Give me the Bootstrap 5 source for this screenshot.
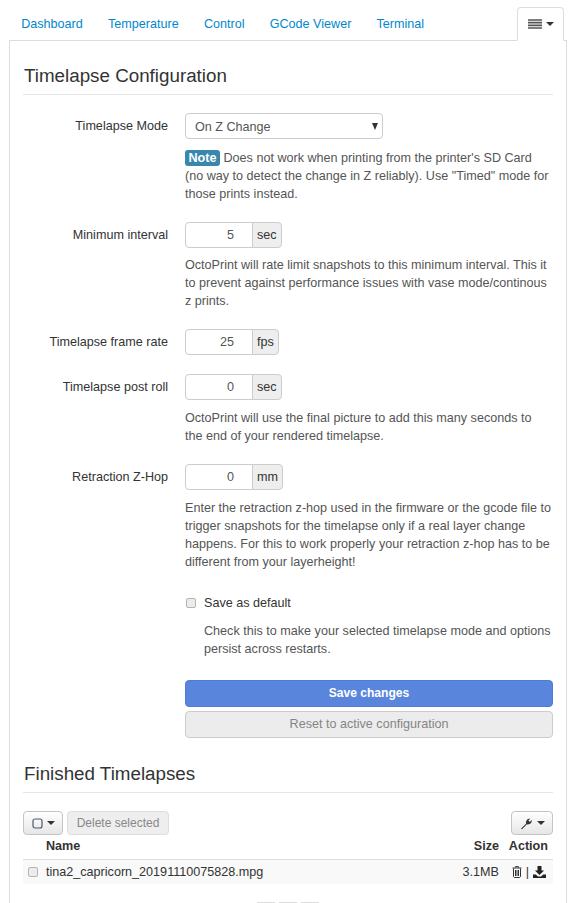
<!DOCTYPE html>
<html lang="en">
<head>
    <meta charset="UTF-8">
    <meta name="viewport" content="width=device-width, initial-scale=1.0">
    <title>Timelapse</title>
    <link href="https://cdn.jsdelivr.net/npm/bootstrap@5.3.0/dist/css/bootstrap.min.css" rel="stylesheet">
    <style>
        html, body { height: 903px; overflow: hidden; }
        body { font-family: "Liberation Sans", Arial, sans-serif; font-size: 12.6px; line-height: 18px; color: #333; background: #fff; }
        .tab-bar { height: 41px; padding-left: 8.6px; position: relative; margin-bottom: -1px; }
        .tab-link { color: #08c; text-decoration: none; padding: 0 12.6px; line-height: 18px; margin-top: 15px; }
        .tab-menu { margin-left: auto; width: 47px; height: 34px; margin-top: 7px; margin-right: 11px; border: 1px solid #ddd; border-bottom-color: #fff; border-radius: 4px 4px 0 0; background: #fff; position: relative; z-index: 2; }
        .caret-down { display: inline-block; width: 0; height: 0; border-left: 4px solid transparent; border-right: 4px solid transparent; border-top: 4px solid #333; }
        .tab-pane-box { margin: 0 8px 0 9px; border: 1px solid #ddd; border-bottom: 0; height: 870px; padding: 14px 13px 0 13px; overflow: hidden; }
        .sec-title { font-size: 18.8px; font-weight: 400; line-height: 42px; height: 40px; margin: 0; padding-left: 1px; border-bottom: 1px solid #e5e5e5; }
        .finished-title { margin-top: 15px; }
        .form-line { display: flex; }
        .first-line { margin-top: 18px; }
        .input-line { margin-top: 19px; }
        .default-line { margin-top: 23px; }
        .line-label { width: 145px; flex: none; text-align: right; margin-right: 17px; padding-top: 4px; }
        .line-body { flex: 1; min-width: 0; }
        .help-text { color: #555; margin: 9px 0 0; }
        .help-text.tight { margin-top: 8px; }
        .help-text.note-help { margin-top: 10px; }
        .help-text.check-help { margin-top: 10px; padding-left: 19px; }
        .note-tag { display: inline-block; background: #3a87ad; color: #fff; font-weight: 700; padding: 0 3.5px; border-radius: 3px; line-height: 16px; }
        .mode-select { width: 198px; height: 26px; border: 1px solid #ccc; border-radius: 4px; padding: 1px 9px 0; background: #fff; color: #555; display: flex; align-items: center; justify-content: space-between; }
        .mode-arrow { width: 0; height: 0; border-left: 3.5px solid transparent; border-right: 3.5px solid transparent; border-top: 7px solid #333; margin-right: -5px; }
        .num-input { display: flex; height: 26px; }
        .num-val { width: 68px; border: 1px solid #ccc; border-radius: 4px 0 0 4px; text-align: right; color: #555; padding-top: 3px; padding-right: 18px; }
        .num-unit { margin-left: -1px; border: 1px solid #ccc; border-radius: 0 4px 4px 0; background: #eee; padding: 3px 4px 0; }
        .save-check { width: 10px; height: 10px; border: 1px solid #b4b4b4; border-radius: 2px; background: #ececec; display: inline-block; flex: none; }
        .default-check { margin: 0 8px 0 1px; }
        .file-check { margin-left: 5px; margin-right: -15px; }
        .wide-btn { width: 100%; height: 27px; border-radius: 4px; text-align: center; line-height: 24px; }
        .wide-btn.is-primary { background: #5a85dc; border: 1px solid #4f7bd6; color: #fff; font-weight: 700; font-size: 12.1px; margin-top: 22px; }
        .wide-btn.is-muted { background: #ececec; border: 1px solid #ccc; color: #858585; margin-top: 4px; }
        .tool-row { margin-top: 18px; }
        .tool-btn { height: 24px; border: 1px solid #c4c4c4; border-radius: 4px; background: linear-gradient(#fff, #e6e6e6); display: flex; align-items: center; justify-content: center; }
        .tool-btn.off { background: #eee; color: #888; border-color: #ddd; width: 102px; margin-left: 4px; font-size: 12px; }
        .check-btn { width: 40px; }
        .wrench-btn { width: 42px; }
        .file-head { font-weight: 700; line-height: 22px; display: flex; padding-right: 5px; border-bottom: 1px solid #ddd; height: 25px; }
        .file-row { background: #f9f9f9; height: 24px; display: flex; align-items: center; padding-right: 4px; }
        .cell-name { flex: 1; padding-left: 23px; }
        .cell-size { width: 60px; text-align: right; }
        .cell-act { width: 49px; text-align: right; }
        .file-row .cell-act { width: 50px; }
        .act-icons { padding-right: 3px; }
        .page-row { margin-top: 18px; }
        .page-box { width: 18px; height: 14px; border: 1px solid #ddd; background: #fff; }
    </style>
</head>
<body>
    <div class="tab-bar d-flex">
        <a class="tab-link" href="#">Dashboard</a>
        <a class="tab-link" href="#">Temperature</a>
        <a class="tab-link" href="#">Control</a>
        <a class="tab-link" href="#">GCode Viewer</a>
        <a class="tab-link" href="#">Terminal</a>
        <div class="tab-menu d-flex align-items-center justify-content-center gap-1">
            <svg width="14" height="10" viewBox="0 0 14 10"><path d="M0 1h14M0 3.700h14M0 6.300h14M0 9h14" stroke="#555" stroke-width="1.700"/></svg>
            <span class="caret-down"></span>
        </div>
    </div>
    <div class="tab-pane-box">
        <h3 class="sec-title">Timelapse Configuration</h3>

        <div class="form-line first-line">
            <div class="line-label">Timelapse Mode</div>
            <div class="line-body">
                <div class="mode-select"><span>On Z Change</span><span class="mode-arrow"></span></div>
                <p class="help-text note-help"><span class="note-tag">Note</span> Does not work when printing from the printer's SD Card (no way to detect the change in Z reliably). Use "Timed" mode for those prints instead.</p>
            </div>
        </div>

        <div class="form-line input-line">
            <div class="line-label">Minimum interval</div>
            <div class="line-body">
                <div class="num-input"><div class="num-val">5</div><div class="num-unit">sec</div></div>
                <p class="help-text tight">OctoPrint will rate limit snapshots to this minimum interval. This it to prevent against performance issues with vase mode/continous z prints.</p>
            </div>
        </div>

        <div class="form-line input-line">
            <div class="line-label">Timelapse frame rate</div>
            <div class="line-body">
                <div class="num-input"><div class="num-val">25</div><div class="num-unit">fps</div></div>
            </div>
        </div>

        <div class="form-line input-line">
            <div class="line-label">Timelapse post roll</div>
            <div class="line-body">
                <div class="num-input"><div class="num-val">0</div><div class="num-unit">sec</div></div>
                <p class="help-text">OctoPrint will use the final picture to add this many seconds to<br>the end of your rendered timelapse.</p>
            </div>
        </div>

        <div class="form-line input-line">
            <div class="line-label">Retraction Z-Hop</div>
            <div class="line-body">
                <div class="num-input"><div class="num-val">0</div><div class="num-unit">mm</div></div>
                <p class="help-text">Enter the retraction z-hop used in the firmware or the gcode file to trigger snapshots for the timelapse only if a real layer change happens. For this to work properly your retraction z-hop has to be different from your layerheight!</p>
            </div>
        </div>

        <div class="form-line default-line">
            <div class="line-label"></div>
            <div class="line-body">
                <div class="d-flex align-items-center"><span class="save-check default-check"></span><span>Save as default</span></div>
                <p class="help-text check-help">Check this to make your selected timelapse mode and options persist across restarts.</p>
                <div class="wide-btn is-primary">Save changes</div>
                <div class="wide-btn is-muted">Reset to active configuration</div>
            </div>
        </div>

        <h3 class="sec-title finished-title">Finished Timelapses</h3>

        <div class="d-flex tool-row">
            <div class="tool-btn check-btn gap-1">
                <svg width="11" height="11" viewBox="0 0 11 11"><rect x="1" y="1" width="9" height="9" rx="2" fill="none" stroke="#4a5a70" stroke-width="1.2"/></svg>
                <span class="caret-down"></span>
            </div>
            <div class="tool-btn off">Delete selected</div>
            <div class="tool-btn wrench-btn ms-auto gap-1">
                <svg width="13" height="13" viewBox="0 0 13 13"><path d="M1 11.800 L6.200 6.600 C5.400 4.200 7.200 1.200 10.400 1.400 L8.400 3.400 L9.800 5 L11.900 3 C12.200 6 9.200 8 6.900 7.200 L2 12.300 Z" fill="#333"/></svg>
                <span class="caret-down"></span>
            </div>
        </div>

        <div class="file-head">
            <div class="cell-name">Name</div>
            <div class="cell-size">Size</div>
            <div class="cell-act">Action</div>
        </div>
        <div class="file-row">
            <span class="save-check file-check"></span>
            <div class="cell-name">tina2_capricorn_20191110075828.mpg</div>
            <div class="cell-size">3.1MB</div>
            <div class="cell-act d-flex align-items-center justify-content-end gap-1 act-icons">
                <svg width="10" height="12" viewBox="0 0 10 12"><path d="M3.500 1.500V.6h3v.9M.5 2h9M1.500 2.500v8.200l.8.8h5.400l.8-.8V2.500M3.500 4v6M5 4v6M6.500 4v6" fill="none" stroke="#333" stroke-width="1"/></svg>
                <span>|</span>
                <svg width="13" height="12" viewBox="0 0 13 12"><path d="M4.500 0h4v4.500h2.600L6.500 9 1.900 4.500H4.500Z M0 8.500h2.800L5 10.500h3l2.200-2h2.800V12H0Z" fill="#222"/></svg>
            </div>
        </div>

        <div class="page-row d-flex justify-content-center gap-1">
            <div class="page-box"></div>
            <div class="page-box"></div>
            <div class="page-box"></div>
        </div>
    </div>
</body>
</html>
